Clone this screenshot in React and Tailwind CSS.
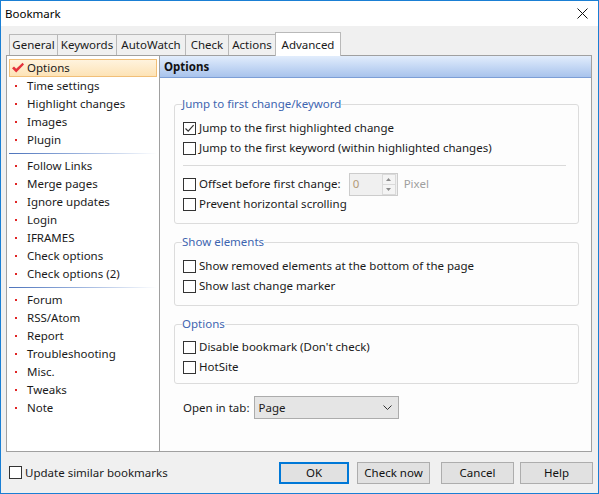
import React from 'react';

const TABS = [
  { label: 'General', w: 'w-[49px]' },
  { label: 'Keywords', w: 'w-[60px]' },
  { label: 'AutoWatch', w: 'w-[70px]' },
  { label: 'Check', w: 'w-[44px]' },
  { label: 'Actions', w: 'w-[48px]' },
];

const NAV = [
  ['Time settings', 'Highlight changes', 'Images', 'Plugin'],
  ['Follow Links', 'Merge pages', 'Ignore updates', 'Login', 'IFRAMES', 'Check options', 'Check options (2)'],
  ['Forum', 'RSS/Atom', 'Report', 'Troubleshooting', 'Misc.', 'Tweaks', 'Note'],
];

function Box({ checked }) {
  return (
    <span className="w-[13px] h-[13px] border border-[#333333] bg-white flex items-center justify-center shrink-0">
      {checked && (
        <svg width="11" height="11" viewBox="0 0 11 11">
          <path d="M1.5 5.5 L4.2 8.2 L9.6 2.2" fill="none" stroke="#333333" strokeWidth="1.2" />
        </svg>
      )}
    </span>
  );
}

function Row({ label, checked, children }) {
  return (
    <div className="h-[20px] flex items-center gap-[3px]">
      <Box checked={checked} />
      <span>{label}</span>
      {children}
    </div>
  );
}

function Group({ title, className, children }) {
  return (
    <fieldset className={`ml-[14px] w-[405px] border border-[#dcdcdc] rounded-[3px] px-[8px] ${className}`}>
      <legend className="-ml-px px-0 leading-[16px] text-[#3d65b0]">{title}</legend>
      {children}
    </fieldset>
  );
}

function NavItem({ label }) {
  return (
    <div className="h-[18px] flex items-center px-[2px]">
      <span className="ml-[6px] w-[2px] h-[2px] bg-[#e02424]" />
      <span className="ml-[10px] leading-[18px]">{label}</span>
    </div>
  );
}

function Separator() {
  return (
    <div className="pt-[4px] pb-[3px] px-[2px]">
      <div className="h-px bg-gradient-to-r from-[#4d73bb] via-[#9fb6df] to-transparent" />
    </div>
  );
}

function Btn({ label, w, primary }) {
  return (
    <button
      className={`${w} h-[22px] bg-[#e1e1e1] text-[#111111] ${
        primary ? 'border-2 border-[#0078d7]' : 'border border-[#adadad]'
      }`}
    >
      {label}
    </button>
  );
}

export default function App() {
  return (
    <div className="w-[599px] h-[494px] border border-[#1a7fd4] bg-[#f0f0f0] flex flex-col text-[11.5px] text-[#1a1a1a] font-['Noto_Sans','Open_Sans',sans-serif] overflow-hidden">
      {/* title bar */}
      <div className="h-[25px] bg-white flex items-center justify-between pl-[4px] pr-[10px] shrink-0">
        <span className="text-black">Bookmark</span>
        <svg width="11" height="11" viewBox="0 0 11 11">
          <path d="M0.5 0.5 L10.5 10.5 M10.5 0.5 L0.5 10.5" stroke="#111111" strokeWidth="1" />
        </svg>
      </div>

      {/* tabs */}
      <div className="mt-[6px] ml-[8px] h-[23px] flex items-end relative z-10">
        {TABS.map((t, i) => (
          <div
            key={t.label}
            className={`${t.w} h-[21px] border-t border-l border-r border-[#b9b9b9] bg-[#f0f0f0] flex items-center justify-center ${
              i ? '-ml-px' : ''
            }`}
          >
            {t.label}
          </div>
        ))}
        <div className="w-[66px] h-[24px] -ml-px -mb-px border-t border-l border-r border-[#b9b9b9] bg-white flex items-center justify-center">
          Advanced
        </div>
      </div>

      {/* panel */}
      <div className="ml-[5px] w-[586px] h-[397px] border border-[#a0a0a0] bg-white flex shrink-0">
        <div className="w-[153px] border-r border-[#a0a0a0] pt-[3px] shrink-0">
          <div className="px-[2px]">
            <div className="h-[18px] flex items-center border border-[#f1bf78] bg-gradient-to-b from-[#fff3de] to-[#fde3b6]">
              <svg width="14" height="12" viewBox="0 0 14 12" className="ml-[1px]">
                <path d="M1 6.2 L3 4.4 L5.2 6.8 L11.6 0.8 L13 2.4 L5.2 10.4 Z" fill="#e5323c" />
              </svg>
              <span className="ml-[2px] leading-[16px]">Options</span>
            </div>
          </div>
          {NAV.map((group, gi) => (
            <React.Fragment key={gi}>
              {gi > 0 && <Separator />}
              {group.map((label) => (
                <NavItem key={label} label={label} />
              ))}
            </React.Fragment>
          ))}
        </div>

        <div className="flex-1 bg-[#fdfdfd]">
          <div className="h-[22px] border-b border-[#7c9ed6] bg-gradient-to-b from-[#e2edfc] to-[#a8c3ec] flex items-center pl-[4px] font-bold text-[#111111]">
            Options
          </div>

          <Group title="Jump to first change/keyword" className="mt-[18px] pt-[6px] pb-[9px]">
            <Row label="Jump to the first highlighted change" checked />
            <Row label="Jump to the first keyword (within highlighted changes)" />
            <div className="mt-[7px] mb-[8px] mr-[4px] h-px bg-[#dadada]" />
            <Row label="Offset before first change:">
              <div className="ml-[5px] w-[49px] h-[23px] border border-[#cccccc] bg-[#f0f0f0] flex items-center">
                <span className="ml-[3px] flex-1 text-[#b39a78]">0</span>
                <div className="w-[14px] h-[21px] mr-[1px] flex flex-col">
                  <div className="flex-1 border border-[#dadada] bg-[#f4f4f4] flex items-center justify-center">
                    <svg width="5" height="3" viewBox="0 0 5 3"><path d="M0 3 L2.5 0 L5 3 Z" fill="#8a8a8a" /></svg>
                  </div>
                  <div className="flex-1 border border-[#dadada] border-t-0 bg-[#f4f4f4] flex items-center justify-center">
                    <svg width="5" height="3" viewBox="0 0 5 3"><path d="M0 0 L2.5 3 L5 0 Z" fill="#8a8a8a" /></svg>
                  </div>
                </div>
              </div>
              <span className="ml-[3px] text-[#a0a0a0]">Pixel</span>
            </Row>
            <Row label="Prevent horizontal scrolling" />
          </Group>

          <Group title="Show elements" className="mt-[10px] pt-[6px] pb-[9px]">
            <Row label="Show removed elements at the bottom of the page" />
            <Row label="Show last change marker" />
          </Group>

          <Group title="Options" className="mt-[10px] pt-[5px] pb-[6px]">
            <Row label="Disable bookmark (Don't check)" />
            <Row label="HotSite" />
          </Group>

          <div className="mt-[12px] ml-[23px] flex items-center gap-[5px]">
            <span>Open in tab:</span>
            <div className="w-[145px] h-[23px] border border-[#acacac] bg-[#e5e5e5] flex items-center justify-between pl-[3px] pr-[6px]">
              <span>Page</span>
              <svg width="9" height="5" viewBox="0 0 9 5">
                <path d="M0.5 0.5 L4.5 4.5 L8.5 0.5" fill="none" stroke="#333333" strokeWidth="1" />
              </svg>
            </div>
          </div>
        </div>
      </div>

      {/* footer */}
      <div className="flex-1 flex items-center pl-[8px]">
        <div className="flex items-center gap-[3px]">
          <Box />
          <span>Update similar bookmarks</span>
        </div>
        <div className="ml-auto mr-[5px] flex items-center">
          <Btn label="OK" w="w-[70px]" primary />
          <div className="ml-[8px]"><Btn label="Check now" w="w-[73px]" /></div>
          <div className="ml-[11px]"><Btn label="Cancel" w="w-[73px]" /></div>
          <div className="ml-[6px]"><Btn label="Help" w="w-[73px]" /></div>
        </div>
      </div>
    </div>
  );
}
